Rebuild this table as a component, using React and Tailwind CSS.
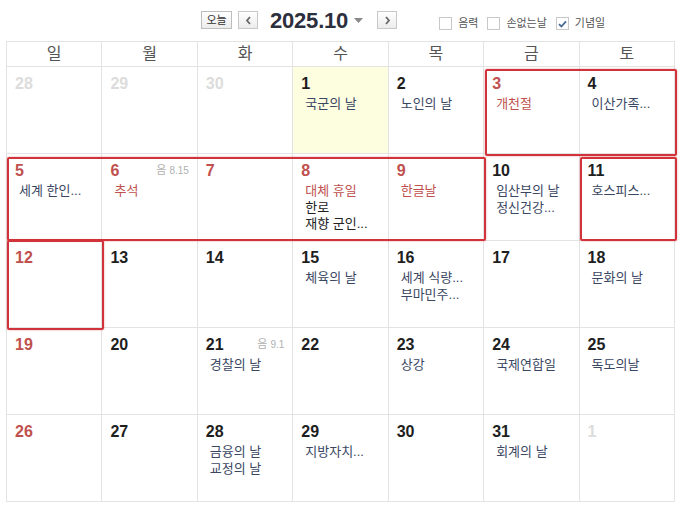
import React from "react";

const NAVY = "text-[#3a4763]";
const RED = "text-[#c0504d]";
const BLACK = "text-[#222]";

// kind: other = 다른 달, red = 일요일/공휴일
const weeks = [
  [
    { d: 28, kind: "other" },
    { d: 29, kind: "other" },
    { d: 30, kind: "other" },
    { d: 1, today: true, ev: [["국군의 날", NAVY]] },
    { d: 2, ev: [["노인의 날", NAVY]] },
    { d: 3, kind: "red", ev: [["개천절", RED]] },
    { d: 4, ev: [["이산가족...", NAVY]] },
  ],
  [
    { d: 5, kind: "red", ev: [["세계 한인...", NAVY]] },
    { d: 6, kind: "red", lunar: "8.15", ev: [["추석", RED]] },
    { d: 7, kind: "red" },
    { d: 8, kind: "red", ev: [["대체 휴일", RED], ["한로", BLACK], ["재향 군인...", BLACK]] },
    { d: 9, kind: "red", ev: [["한글날", RED]] },
    { d: 10, ev: [["임산부의 날", NAVY], ["정신건강...", NAVY]] },
    { d: 11, ev: [["호스피스...", NAVY]] },
  ],
  [
    { d: 12, kind: "red" },
    { d: 13 },
    { d: 14 },
    { d: 15, ev: [["체육의 날", NAVY]] },
    { d: 16, ev: [["세계 식량...", NAVY], ["부마민주...", NAVY]] },
    { d: 17 },
    { d: 18, ev: [["문화의 날", NAVY]] },
  ],
  [
    { d: 19, kind: "red" },
    { d: 20 },
    { d: 21, lunar: "9.1", ev: [["경찰의 날", NAVY]] },
    { d: 22 },
    { d: 23, ev: [["상강", NAVY]] },
    { d: 24, ev: [["국제연합일", NAVY]] },
    { d: 25, ev: [["독도의날", NAVY]] },
  ],
  [
    { d: 26, kind: "red" },
    { d: 27 },
    { d: 28, ev: [["금융의 날", NAVY], ["교정의 날", NAVY]] },
    { d: 29, ev: [["지방자치...", NAVY]] },
    { d: 30 },
    { d: 31, ev: [["회계의 날", NAVY]] },
    { d: 1, kind: "other" },
  ],
];

const days = ["일", "월", "화", "수", "목", "금", "토"];

// 빨간 표시 박스 (그리드 기준 좌표)
const marks = [
  "left-[478px] top-[27px] w-[192px] h-[87px]",
  "left-[0px] top-[115px] w-[479px] h-[84px]",
  "left-[573px] top-[115px] w-[97px] h-[84px]",
  "left-[0px] top-[198px] w-[97px] h-[90px]",
];

function Checkbox({ label, checked }) {
  return (
    <label className="flex items-center gap-[6px] text-[11px] text-[#555]">
      <span className="flex h-[13px] w-[13px] items-center justify-center border border-[#c8c8c8] bg-white">
        {checked && (
          <svg width="9" height="8" viewBox="0 0 9 8">
            <path d="M1 4.2 L3.4 6.5 L8 1.3" fill="none" stroke="#4a6a96" strokeWidth="1.8" />
          </svg>
        )}
      </span>
      {label}
    </label>
  );
}

function Cell({ c }) {
  const num =
    c.kind === "other" ? "text-[#dcdcdc]" : c.kind === "red" ? RED : "text-[#1e1e1e]";
  return (
    <div
      className={`h-[87px] border-r border-b border-[#e3e3e3] px-[8px] pt-[8px] ${
        c.today ? "bg-[#fdfde0]" : "bg-white"
      }`}
    >
      <div className="flex items-start justify-between">
        <span className={`text-[16px] font-bold leading-[18px] ${num}`}>{c.d}</span>
        {c.lunar && (
          <span className="pt-[1px] text-[11px] leading-[14px] text-[#b0b0b0]">
            음 <span className="text-[10px]">{c.lunar}</span>
          </span>
        )}
      </div>
      <div className="mt-[3px] pl-[4px]">
        {(c.ev || []).map(([t, col], i) => (
          <div key={i} className={`whitespace-nowrap text-[13px] leading-[16.5px] ${col}`}>
            {t}
          </div>
        ))}
      </div>
    </div>
  );
}

export default function App() {
  return (
    <div
      className="h-[507px] w-[683px] bg-white"
      style={{ fontFamily: '"Liberation Sans", "Noto Sans CJK KR", sans-serif' }}
    >
      <div className="flex h-[41px] items-center pl-[201px]">
        <button className="mb-[1px] h-[18px] w-[31px] border border-[#bdbdbd] bg-gradient-to-b from-white to-[#ececec] text-[11px] leading-[16px] text-[#333]">
          오늘
        </button>
        <button className="mb-[1px] ml-[6px] flex h-[18px] w-[20px] items-center justify-center border border-[#c8c8c8] bg-gradient-to-b from-white to-[#ececec]">
          <svg width="7" height="9" viewBox="0 0 7 9">
            <path d="M5 1 L2 4.5 L5 8" fill="none" stroke="#666" strokeWidth="1.8" />
          </svg>
        </button>
        <span className="ml-[12px] text-[22px] font-bold leading-none tracking-[-0.2px] text-[#2c2f3d]">
          2025.10
        </span>
        <svg className="ml-[6px]" width="9" height="5" viewBox="0 0 9 5">
          <path d="M0 0 H9 L4.5 5 Z" fill="#888" />
        </svg>
        <button className="mb-[1px] ml-[14px] flex h-[18px] w-[20px] items-center justify-center border border-[#c8c8c8] bg-gradient-to-b from-white to-[#ececec]">
          <svg width="7" height="9" viewBox="0 0 7 9">
            <path d="M2 1 L5 4.5 L2 8" fill="none" stroke="#666" strokeWidth="1.8" />
          </svg>
        </button>
        <div className="ml-[42px] mt-[6px] flex items-center gap-[9px]">
          <Checkbox label="음력" />
          <Checkbox label="손없는날" />
          <Checkbox label="기념일" checked />
        </div>
      </div>

      <div className="relative ml-[6px] w-[669px] border-l border-t border-[#e3e3e3]">
        <div className="grid grid-cols-7">
          {days.map((d) => (
            <div
              key={d}
              className="h-[25px] border-r border-b border-[#e3e3e3] text-center text-[16px] leading-[24px] text-[#555]"
            >
              {d}
            </div>
          ))}
        </div>
        {weeks.map((w, i) => (
          <div key={i} className="grid grid-cols-7">
            {w.map((c, j) => (
              <Cell key={j} c={c} />
            ))}
          </div>
        ))}
        {marks.map((m, i) => (
          <div
            key={i}
            className={`pointer-events-none absolute rounded-[2px] border-2 border-[#d2333b] shadow-[0_0_2px_rgba(210,51,59,0.5)] ${m}`}
          />
        ))}
      </div>
    </div>
  );
}
